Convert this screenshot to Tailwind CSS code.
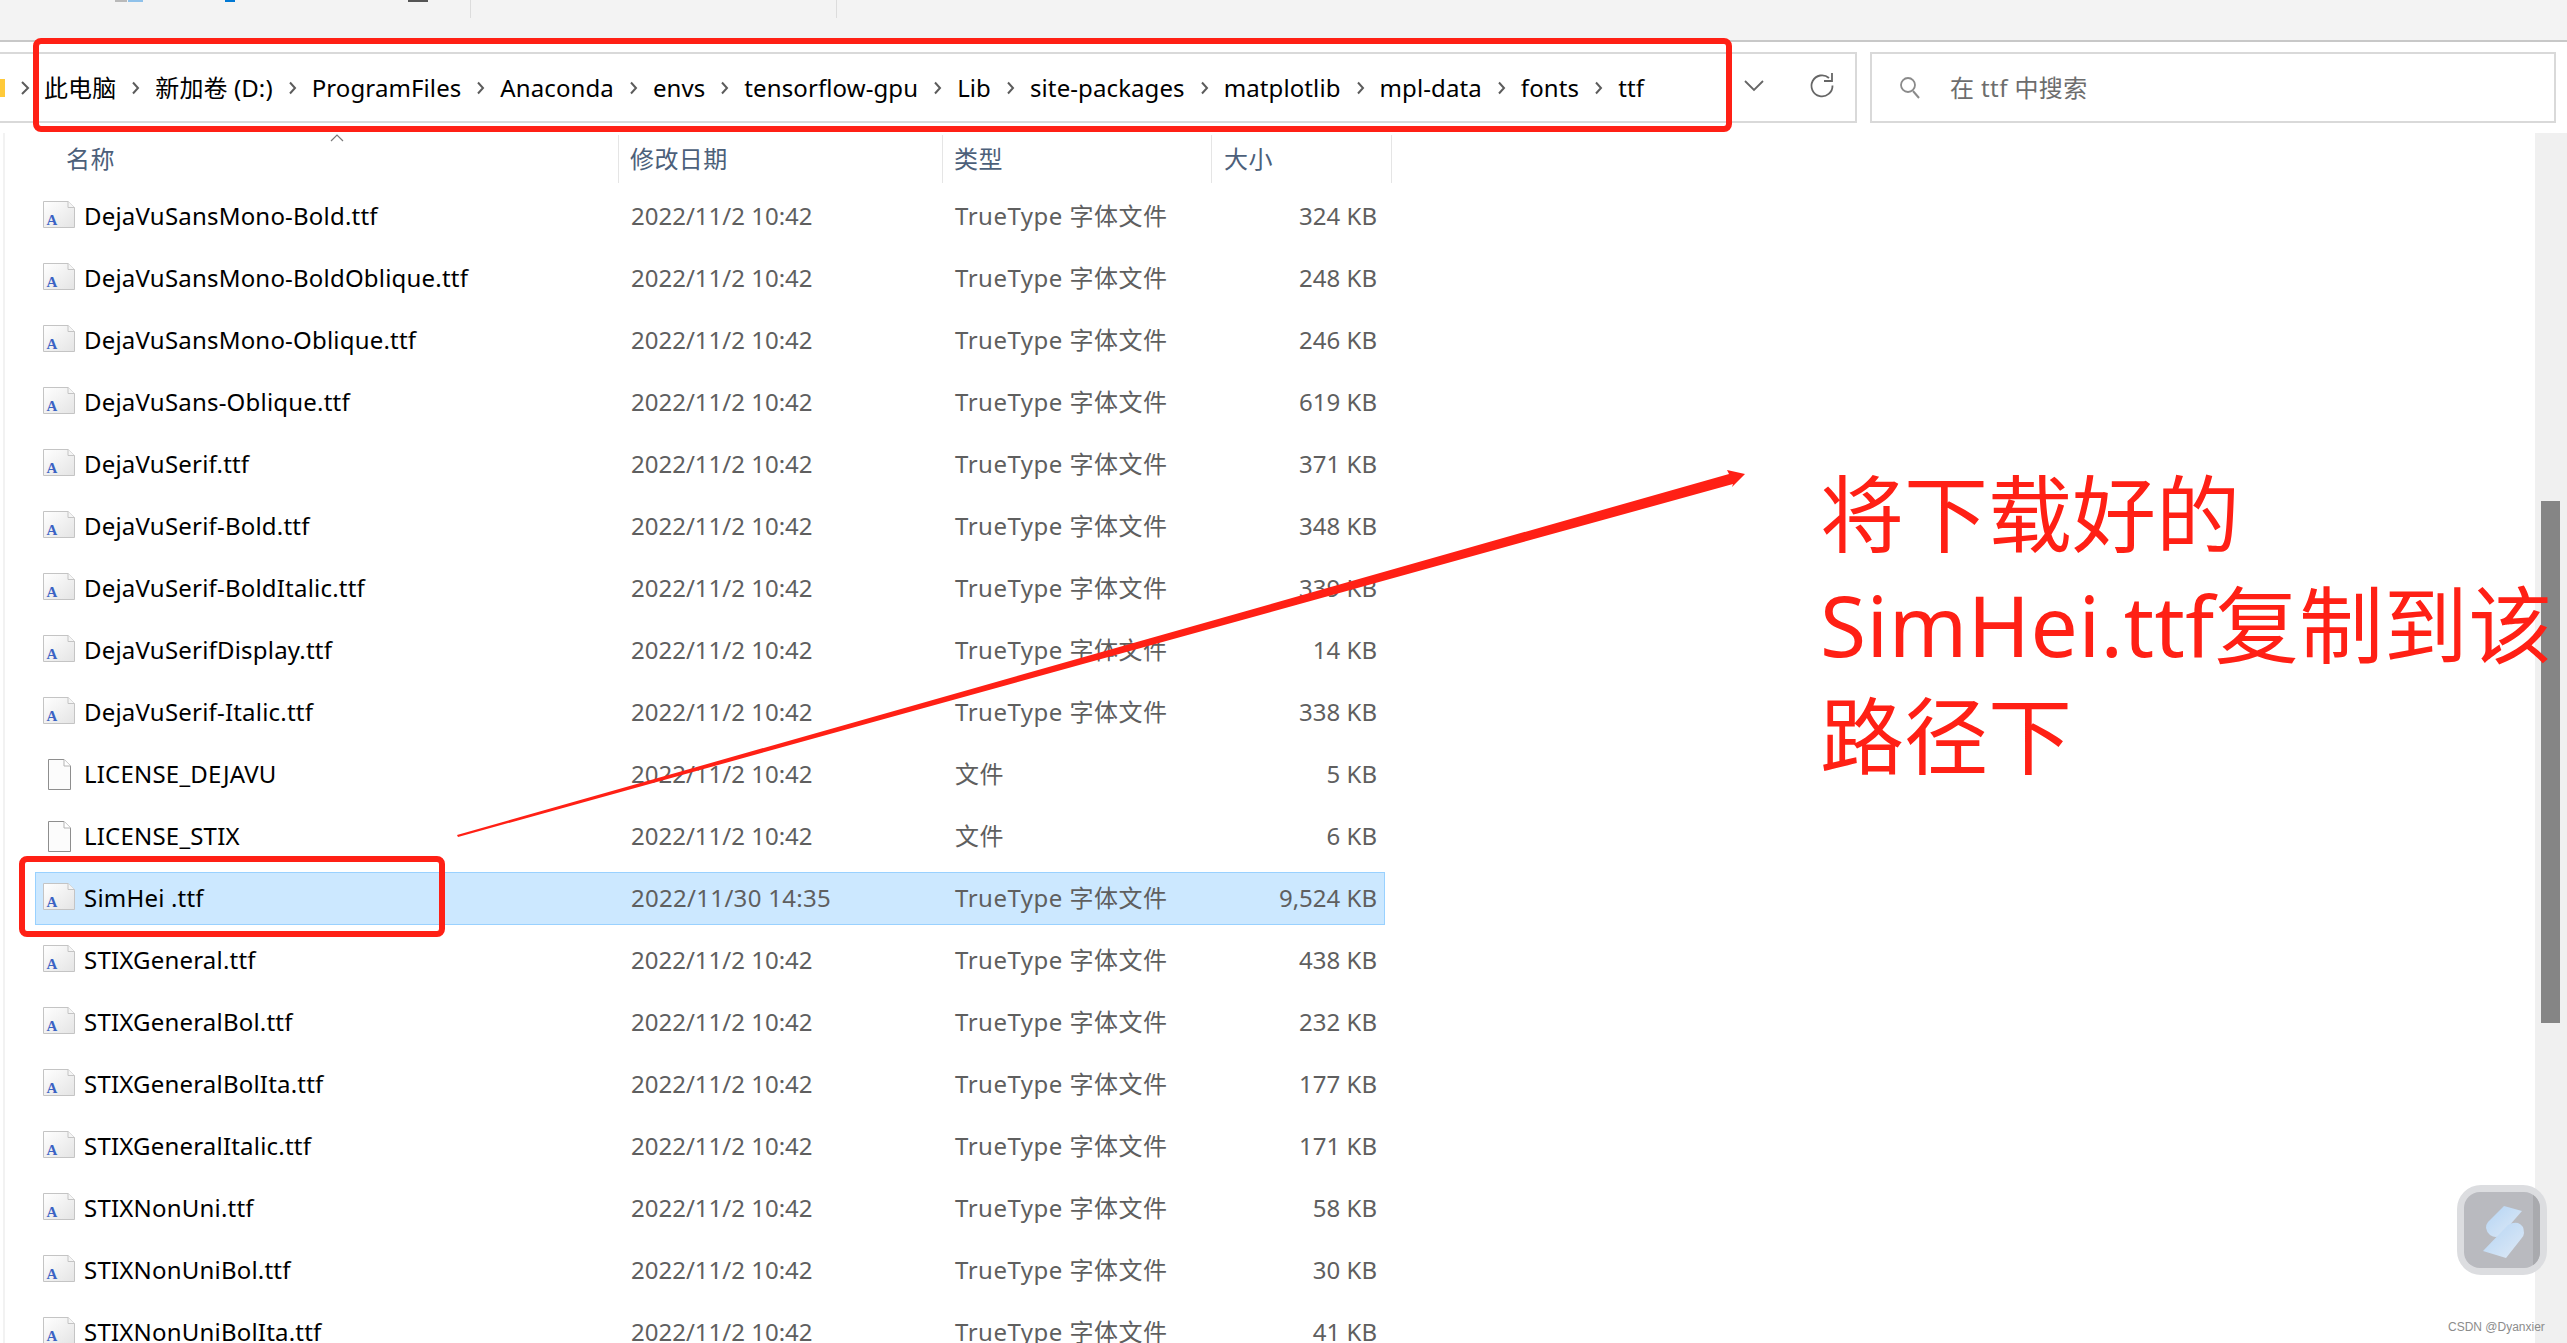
<!DOCTYPE html>
<html>
<head>
    <meta charset="UTF-8">
    <meta name="viewport" content="width=device-width, initial-scale=1.0">
    <script src="https://cdn.jsdelivr.net/npm/@tailwindcss/browser@4"></script>
</head>
<body class="relative w-[2567px] h-[1343px] overflow-hidden bg-white font-['Noto_Sans','Noto_Sans_CJK_SC',sans-serif] text-[24px]">

    <!-- toolbar, cut off at the top -->
    <div class="relative h-[42px] bg-[#f3f3f3] border-b-2 border-[#c8c8c8]">
        <div class="absolute left-[115px] top-0 w-[12px] h-[2px] bg-[#b9b9b9]"></div>
        <div class="absolute left-[128px] top-0 w-[15px] h-[2px] bg-[#8fc1ea]"></div>
        <div class="absolute left-[225px] top-0 w-[10px] h-[2px] bg-[#0078d4]"></div>
        <div class="absolute left-[408px] top-0 w-[20px] h-[2px] bg-[#555555]"></div>
        <div class="absolute left-[470px] top-0 w-px h-[18px] bg-[#dcdcdc]"></div>
        <div class="absolute left-[836px] top-0 w-px h-[18px] bg-[#dcdcdc]"></div>
    </div>

    <!-- address + search -->
    <div class="flex mt-[10px] h-[71px] gap-[13px]">
        <div class="relative flex items-center w-[1857px] border-y-2 border-r-2 border-[#d9d9d9] text-black">
            <div class="w-[5px] h-[18px] bg-[#ffca3a]"></div>
            <svg class="ml-[15px] mr-[14px] w-[10px] h-[16px] shrink-0" viewBox="0 0 10 16"><path d="M2 2l6 6-6 6" fill="none" stroke="#5c5c5c" stroke-width="2"/></svg>
            <div id="crumbs" class="flex items-center whitespace-nowrap tracking-[0.1px]"></div>
            <svg class="absolute left-[1744px] top-[26px] w-[20px] h-[12px]" viewBox="0 0 20 12"><path d="M1 1l9 9 9-9" fill="none" stroke="#666666" stroke-width="1.8"/></svg>
            <svg class="absolute left-[1809px] top-[17px] w-[26px] h-[28px]" viewBox="0 0 26 28"><path d="M23.5 14.5A10.5 10.5 0 1 1 20 7" fill="none" stroke="#666666" stroke-width="1.8"/><path d="M23 2v8h-8" fill="none" stroke="#666666" stroke-width="1.8"/></svg>
        </div>
        <div class="flex items-center w-[686px] border-2 border-[#d9d9d9] text-[#6d6d6d]">
            <svg class="ml-[27px] w-[22px] h-[24px]" viewBox="0 0 22 24"><circle cx="9" cy="9" r="7" fill="none" stroke="#8a8a8a" stroke-width="1.8"/><path d="M14 15l6 7" stroke="#8a8a8a" stroke-width="2"/></svg>
            <span class="ml-[29px] tracking-[0.4px]">在 ttf 中搜索</span>
        </div>
    </div>

    <!-- file list + scrollbar -->
    <div class="flex mt-[10px] h-[1210px]">
        <div class="flex-1 ml-[3px] border-l-2 border-[#f2f2f2] overflow-hidden">
            <div class="relative flex h-[50px] items-center pt-[2px] text-[#4c607a] tracking-[0.4px]">
                <div class="w-[614px] h-full flex items-center pl-[61px] border-r border-[#e5e5e5]">名称</div>
                <div class="w-[324px] h-full flex items-center pl-[11px] border-r border-[#e5e5e5]">修改日期</div>
                <div class="w-[269px] h-full flex items-center pl-[11px] border-r border-[#e5e5e5]">类型</div>
                <div class="w-[180px] h-full flex items-center pl-[12px] border-r border-[#e5e5e5]">大小</div>
                <svg class="absolute left-[325px] top-[1px] w-[14px] h-[8px]" viewBox="0 0 14 8"><path d="M1 7l6-6 6 6" fill="none" stroke="#7a7a7a" stroke-width="1.2"/></svg>
            </div>
            <div id="rows" class="pt-[2px]"></div>
        </div>
        <div class="w-[32px] bg-[#f0f0f0] pl-[6px]">
            <div class="mt-[368px] w-[19px] h-[522px] bg-[#858585]"></div>
        </div>
    </div>

    <!-- annotations drawn on top of the screenshot -->
    <div class="absolute left-[33px] top-[38px] w-[1699px] h-[94px] border-[6px] border-[#ff2015] rounded-lg"></div>
    <div class="absolute left-[19px] top-[856px] w-[426px] h-[81px] border-[6px] border-[#ff2015] rounded-lg"></div>
    <svg class="absolute left-0 top-0 w-[2567px] h-[1343px] pointer-events-none" viewBox="0 0 2567 1343">
        <path d="M457 835L1729 474 1727 470 1745 474 1732 487 1733 484 458 837Z" fill="#ff2015"/>
    </svg>
    <div class="absolute left-[1820px] top-[458px] w-[747px] text-[84px] leading-[111px] text-[#ff2015] whitespace-nowrap font-normal">将下载好的<br><span class="tracking-[0.5px]">SimHei.ttf复制到该</span><br>路径下</div>

    <!-- floating button + watermark -->
    <div class="absolute left-[2457px] top-[1185px] w-[90px] h-[90px] rounded-[24px] bg-[#dcdde0] p-[7px]">
        <div class="relative w-[76px] h-[76px] rounded-[16px] overflow-hidden bg-[#b9babf]">
            <div class="absolute left-[69px] top-0 w-[7px] h-full bg-[#a9aaae]"></div>
            <svg class="absolute left-0 top-0" width="76" height="76" viewBox="0 0 76 76">
                <defs><linearGradient id="s" x1="0" y1="0" x2="1" y2="1"><stop offset="0" stop-color="#b4d4f4"/><stop offset="1" stop-color="#dfeaf6"/></linearGradient></defs>
                <path d="M40 14L58 19 37 43Q32 47 26 43 19 36 24 30Z" fill="url(#s)"/>
                <path d="M54 31Q60 33 60 41Q60 44 57 47L42 66 19 59 44 33Q49 30 54 31Z" fill="url(#s)"/>
            </svg>
        </div>
    </div>
    <div class="absolute left-[2448px] top-[1319px] text-[12px] leading-[16px] text-[#8c8c8c] font-['Liberation_Sans',sans-serif]">CSDN @Dyanxier</div>

    <script>
        const crumbs = ["此电脑", "新加卷 (D:)", "ProgramFiles", "Anaconda", "envs", "tensorflow-gpu", "Lib", "site-packages", "matplotlib", "mpl-data", "fonts", "ttf"]
        const chevron = `<svg class="mx-[15px] w-[9px] h-[14px] shrink-0" viewBox="0 0 9 14"><path d="M2 1.5l5 5.5-5 5.5" fill="none" stroke="#5c5c5c" stroke-width="2"/></svg>`
        document.getElementById("crumbs").innerHTML = crumbs.map(c => `<span>${c}</span>`).join(chevron)

        const fontIcon = `<svg class="-mt-[3px] w-[32px] h-[27px] shrink-0" viewBox="0 0 32 27">
            <defs><linearGradient id="page" x1="0" y1="0" x2="1" y2="1"><stop offset="0" stop-color="#ffffff"/><stop offset="1" stop-color="#e4e4e4"/></linearGradient></defs>
            <path d="M.5.5H25L31.5 6.5V26.5H.5Z" fill="url(#page)" stroke="#c4c4c4"/><path d="M25 .5V6.5H31.5" fill="#f5f5f5" stroke="#c4c4c4"/>
            <text x="3.5" y="24" font-family="Liberation Serif" font-weight="bold" font-size="15" fill="#3b62c4">A</text></svg>`
        const blankIcon = `<svg class="ml-[5px] mr-[4px] w-[23px] h-[31px] shrink-0" viewBox="0 0 23 31"><path d="M.5.5H16L22.5 7V30.5H.5Z" fill="#fcfcfc" stroke="#8e8e8e"/><path d="M16 .5V7H22.5" fill="#fff" stroke="#b5b5b5"/></svg>`

        const files = [
            ["DejaVuSansMono-Bold.ttf", "324 KB"],
            ["DejaVuSansMono-BoldOblique.ttf", "248 KB"],
            ["DejaVuSansMono-Oblique.ttf", "246 KB"],
            ["DejaVuSans-Oblique.ttf", "619 KB"],
            ["DejaVuSerif.ttf", "371 KB"],
            ["DejaVuSerif-Bold.ttf", "348 KB"],
            ["DejaVuSerif-BoldItalic.ttf", "339 KB"],
            ["DejaVuSerifDisplay.ttf", "14 KB"],
            ["DejaVuSerif-Italic.ttf", "338 KB"],
            ["LICENSE_DEJAVU", "5 KB", "plain"],
            ["LICENSE_STIX", "6 KB", "plain"],
            ["SimHei .ttf", "9,524 KB", "selected"],
            ["STIXGeneral.ttf", "438 KB"],
            ["STIXGeneralBol.ttf", "232 KB"],
            ["STIXGeneralBolIta.ttf", "177 KB"],
            ["STIXGeneralItalic.ttf", "171 KB"],
            ["STIXNonUni.ttf", "58 KB"],
            ["STIXNonUniBol.ttf", "30 KB"],
            ["STIXNonUniBolIta.ttf", "41 KB"],
        ]

        document.getElementById("rows").innerHTML = files.map(([name, size, kind]) => {
            const selected = kind === "selected"
            const date = selected ? "2022/11/30 14:35" : "2022/11/2 10:42"
            const type = kind === "plain" ? "文件" : "TrueType 字体文件"
            const box = selected ? "bg-[#cce8ff] border-[#99d1ff]" : "border-transparent"
            const dateTrack = selected ? "tracking-[0.3px]" : ""
            return `<div class="h-[62px] flex items-center">
                <div class="ml-[30px] w-[1350px] h-[53px] flex items-center border ${box}">
                    <div class="w-[583px] flex items-center pl-[7px] text-black">${kind === "plain" ? blankIcon : fontIcon}<span class="ml-[9px] tracking-[0.2px]">${name}</span></div>
                    <div class="w-[324px] pl-[12px] text-[#5f5f5f] ${dateTrack}">${date}</div>
                    <div class="w-[269px] pl-[12px] text-[#5f5f5f] tracking-[0.5px]">${type}</div>
                    <div class="w-[165px] text-right text-[#5f5f5f]">${size}</div>
                </div>
            </div>`
        }).join("")
    </script>
</body>
</html>
